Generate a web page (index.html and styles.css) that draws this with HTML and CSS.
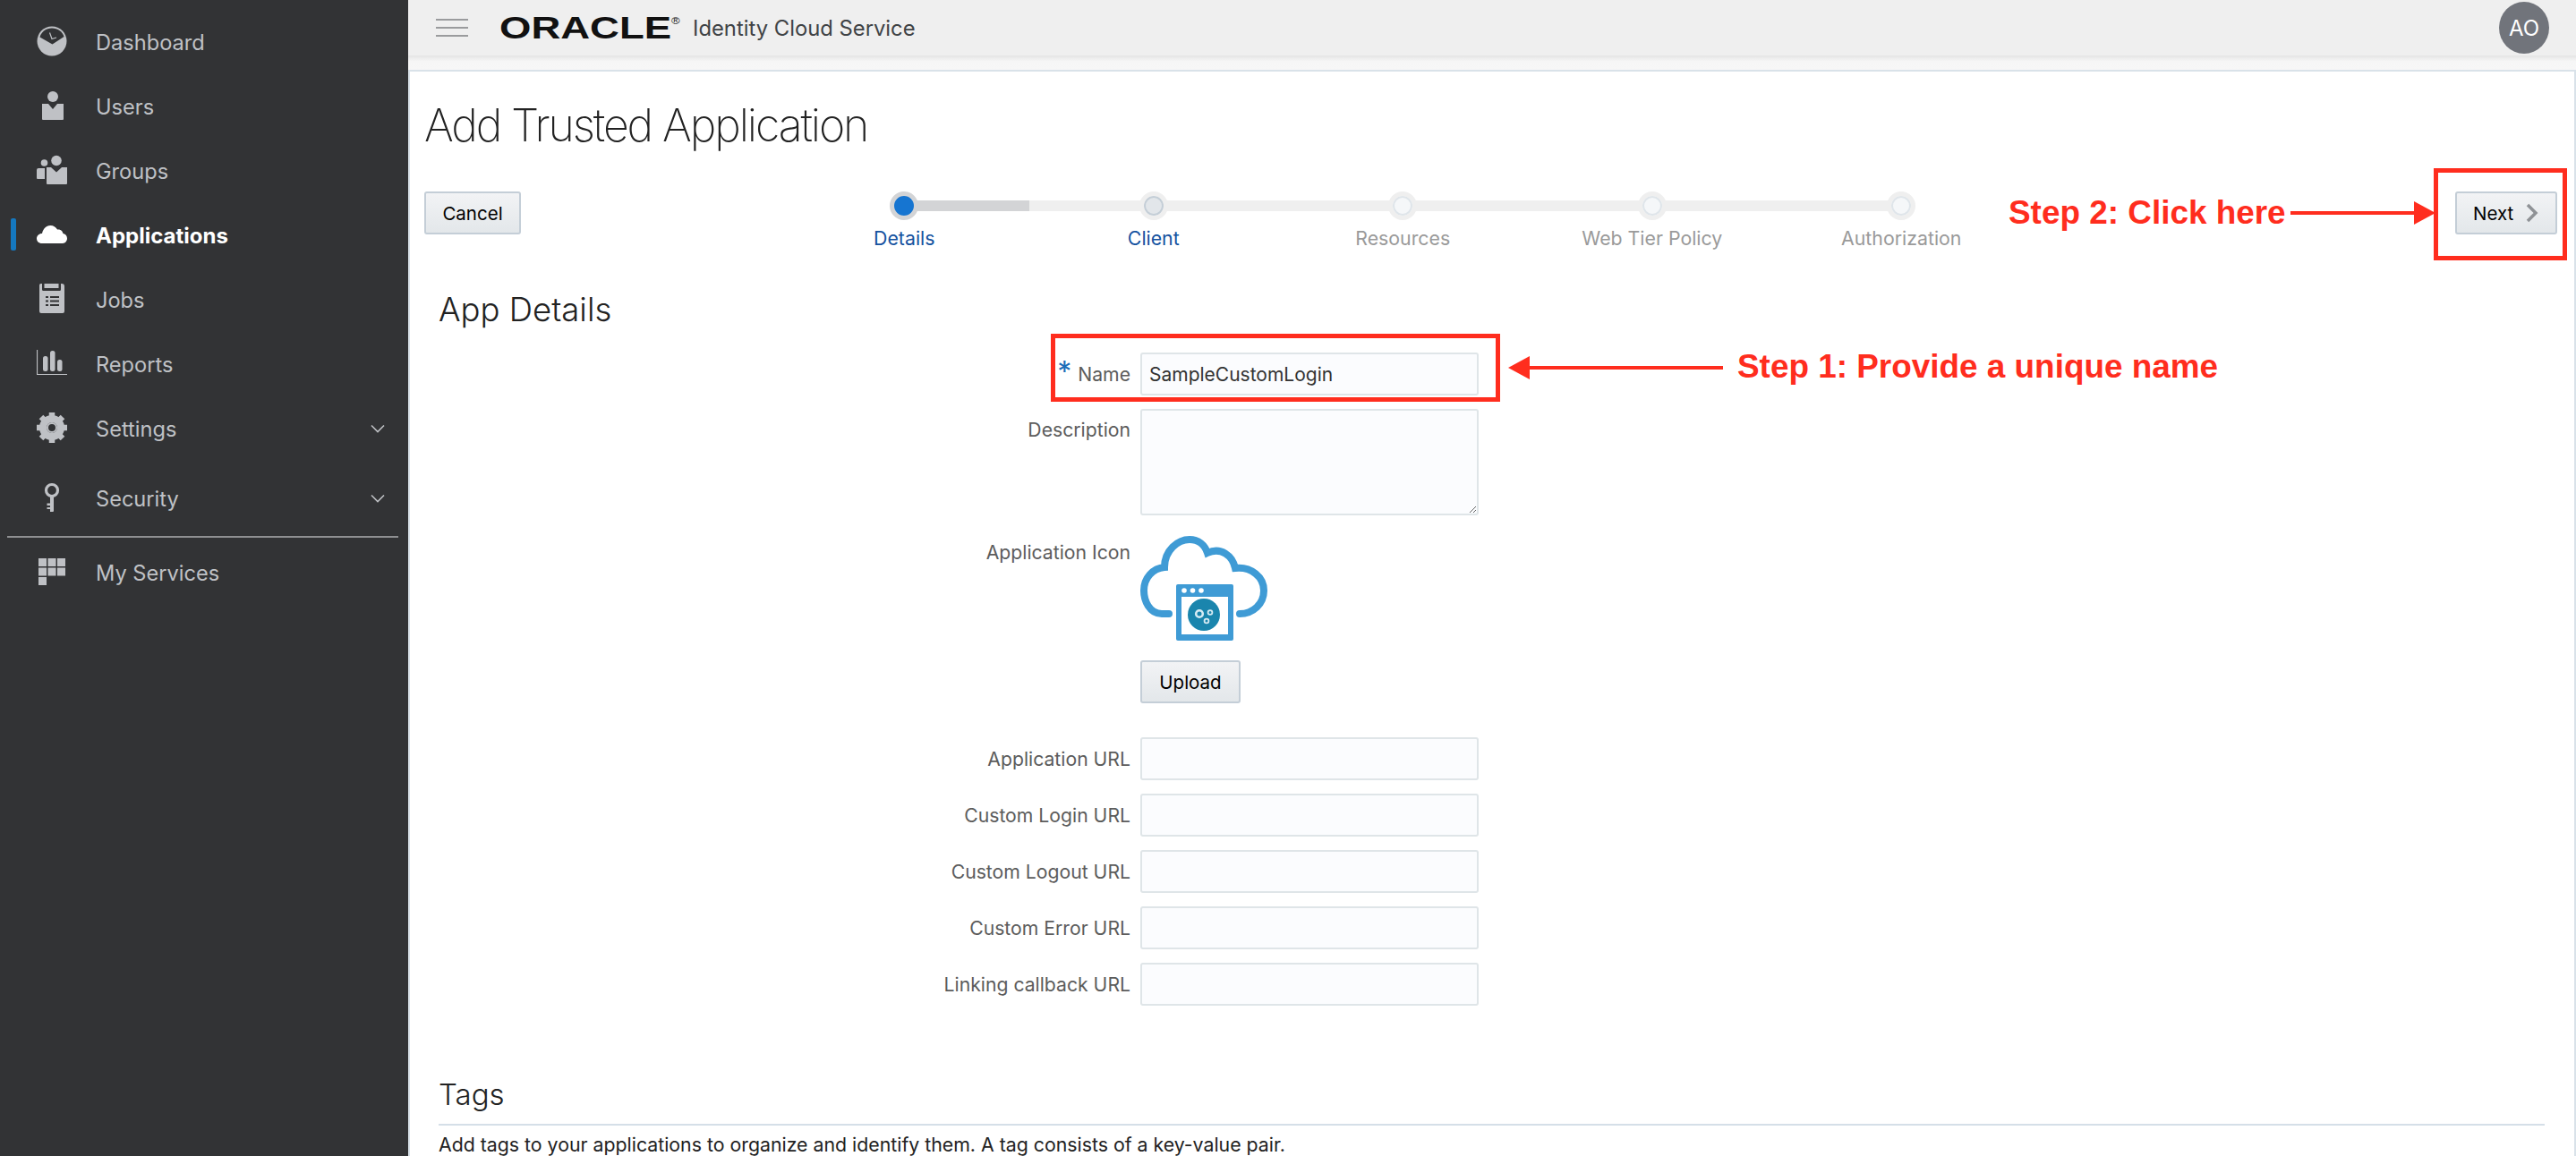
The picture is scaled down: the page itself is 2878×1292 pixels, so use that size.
FILE: index.html
```html
<!DOCTYPE html>
<html lang="en">
<head>
  <meta charset="UTF-8" />
  <title>Add Trusted Application</title>
  <link rel="stylesheet" href="styles.css">
</head>
<body>
  <aside class="sidebar">
    <nav class="nav">
      <a class="nav-item">
        <svg class="nav-icon" viewBox="0 0 34 34"><circle cx="17" cy="17" r="16.5" fill="currentColor"/><path d="M3.5 12.5C5 6.5 10.500 2.500 17 2.500s12 4 13.500 9.500L17.500 20.500Z" fill="#323335"/><path d="M14.500 7.500l2.500 7 5-1.500" fill="none" stroke="currentColor" stroke-width="1.200"/></svg>
        <span>Dashboard</span>
      </a>
      <a class="nav-item">
        <svg class="nav-icon" viewBox="0 0 34 34"><circle cx="18" cy="7" r="6" fill="currentColor"/><path d="M6 15h7l5 6 5-6h7v17a1 1 0 0 1-1 1H7a1 1 0 0 1-1-1Z" fill="currentColor"/></svg>
        <span>Users</span>
      </a>
      <a class="nav-item">
        <svg class="nav-icon" viewBox="0 0 34 34"><circle cx="22" cy="6.500" r="5.800" fill="currentColor"/><circle cx="8.500" cy="9" r="3.800" fill="currentColor"/><path d="M11 14h5l6 5.500 6-5.500h6v18a1 1 0 0 1-1 1H12a1 1 0 0 1-1-1Z" fill="currentColor"/><path d="M0 17a2 2 0 0 1 2-2h7v12H1a1 1 0 0 1-1-1Z" fill="currentColor"/></svg>
        <span>Groups</span>
      </a>
      <a class="nav-item nav-active">
        <svg class="nav-icon" viewBox="0 0 34 34"><path d="M6 27C2 27 0 24.500 0 21.500S2.500 16 6 16C7 10.500 11 7 15.500 7c3.500 0 6 2 7.500 4.500 4-.5 6 2 6.500 4.500 3 .5 4.500 3 4.500 5.500S32 27 29 27Z" fill="currentColor"/></svg>
        <span>Applications</span>
      </a>
      <a class="nav-item">
        <svg class="nav-icon" viewBox="0 0 34 34"><path d="M5.500 0H6v6.500a1.500 1.500 0 0 0 1.500 1.500h18A1.500 1.500 0 0 0 27 6.500V0h1a3 3 0 0 1 3 3v28a2 2 0 0 1-2 2H5a2 2 0 0 1-2-2V2a2 2 0 0 1 2.500-2ZM8.500 0h16v5h-16Z" fill="currentColor"/><path d="M10 15h3M15 15h10M10 19.500h3M15 19.500h10M10 24h3M15 24h10" stroke="#323335" stroke-width="2"/></svg>
        <span>Jobs</span>
      </a>
      <a class="nav-item">
        <svg class="nav-icon" viewBox="0 0 34 34"><path d="M.5 2v27.500H34" fill="none" stroke="currentColor" stroke-width="1.200"/><rect x="7" y="9" width="5.500" height="17" rx="2.500" fill="currentColor"/><rect x="15" y="3" width="5.500" height="23" rx="2.500" fill="currentColor"/><rect x="23" y="13" width="5.500" height="13" rx="2.500" fill="currentColor"/></svg>
        <span>Reports</span>
      </a>
      <a class="nav-item">
        <svg class="nav-icon" viewBox="0 0 34 34"><circle cx="17" cy="17" r="10" fill="none" stroke="currentColor" stroke-width="8"/><path d="M17 0v34M0 17h34M5 5l24 24M29 5L5 29" stroke="currentColor" stroke-width="6.500" stroke-dasharray="6 22"/><circle cx="17" cy="17" r="3.500" fill="#323335"/><circle cx="17" cy="17" r="5" fill="none" stroke="currentColor" stroke-width="2"/></svg>
        <span>Settings</span>
        <svg class="nav-chevron" viewBox="0 0 16 10"><path d="M1 1.500l7 7 7-7" fill="none" stroke="currentColor" stroke-width="1.600"/></svg>
      </a>
      <a class="nav-item nav-security">
        <svg class="nav-icon" viewBox="0 0 34 34"><circle cx="17" cy="9" r="6.500" fill="none" stroke="currentColor" stroke-width="3.200"/><path d="M15 15h4v17a1 1 0 0 1-1 1h-3v-3h-3.500v-2H15v-2h-3.500v-2.500H15Z" fill="currentColor"/></svg>
        <span>Security</span>
        <svg class="nav-chevron" viewBox="0 0 16 10"><path d="M1 1.500l7 7 7-7" fill="none" stroke="currentColor" stroke-width="1.600"/></svg>
      </a>
    </nav>
    <hr class="nav-divider">
    <a class="nav-item nav-services">
      <svg class="nav-icon" viewBox="0 0 34 34"><path d="M2 2h9v9H2ZM12.500 2h9v9h-9ZM23 2h9v9h-9ZM2 12.500h9v9H2ZM12.500 12.500h9v9h-9ZM23 12.500h9v9h-9ZM2 23h9v9H2Z" fill="currentColor"/></svg>
      <span>My Services</span>
    </a>
  </aside>

  <div class="main">
    <header class="topbar">
      <svg class="hamburger" viewBox="0 0 36 20"><path d="M0 1h36M0 10h36M0 19h36" stroke="#9a9b9d" stroke-width="2"/></svg>
      <span class="logo">ORACLE<sup>®</sup></span>
      <span class="product">Identity Cloud Service</span>
      <span class="avatar">AO</span>
    </header>
    <div class="topbar-shadow"></div>

    <section class="panel">
      <h1 class="title">Add Trusted Application</h1>

      <div class="actions">
        <button class="btn btn-cancel">Cancel</button>
        <ol class="stepper">
          <li class="track"><span class="track-done"></span></li>
          <li class="step step-current"><span class="dot"></span><span class="step-label">Details</span></li>
          <li class="step step-next"><span class="dot"></span><span class="step-label">Client</span></li>
          <li class="step"><span class="dot"></span><span class="step-label">Resources</span></li>
          <li class="step"><span class="dot"></span><span class="step-label">Web Tier Policy</span></li>
          <li class="step"><span class="dot"></span><span class="step-label">Authorization</span></li>
        </ol>
        <button class="btn btn-next">Next
          <svg class="next-icon" viewBox="0 0 14 22"><path d="M2 2l9 9-9 9" fill="none" stroke="#8f9296" stroke-width="3.500"/></svg>
        </button>
      </div>

      <h2 class="section-title">App Details</h2>

      <form class="form">
        <div class="row row-name">
          <label class="field-label"><span class="required">*</span>Name</label>
          <input class="field" type="text" value="SampleCustomLogin">
        </div>
        <div class="row row-desc">
          <label class="field-label">Description</label>
          <textarea class="field field-area"></textarea>
        </div>
        <div class="row row-icon">
          <label class="field-label">Application Icon</label>
          <div class="icon-col">
            <svg class="app-icon" viewBox="0 0 142 117">
              <path d="M32 87H24C10 87 4 72 4 61C4 47 14 36 27 35C27 16 42 4 55 4C65 4 72 10 75 19C90 12 103 22 106 36C124 34 138 46 138 61C138 76 126 87 111 87" fill="none" stroke="#3f9bd5" stroke-width="8" stroke-linecap="round"/>
              <rect x="40" y="54" width="64" height="63" rx="2" fill="#3f9bd5"/>
              <rect x="46" y="68" width="52" height="42" fill="#fff"/>
              <circle cx="49" cy="61" r="2.800" fill="#fff"/>
              <circle cx="58.500" cy="61" r="2.800" fill="#fff"/>
              <circle cx="68" cy="61" r="2.800" fill="#fff"/>
              <circle cx="71" cy="88" r="18" fill="#1a85ad"/>
              <circle cx="66" cy="87" r="3.800" fill="none" stroke="#d6ebf3" stroke-width="2.600"/>
              <circle cx="78" cy="85.500" r="2.400" fill="none" stroke="#d6ebf3" stroke-width="1.800"/>
              <circle cx="74" cy="95" r="2.400" fill="none" stroke="#d6ebf3" stroke-width="1.800"/>
            </svg>
            <button class="btn btn-upload" type="button">Upload</button>
          </div>
        </div>
        <div class="row row-url1">
          <label class="field-label">Application URL</label>
          <input class="field" type="text">
        </div>
        <div class="row row-url">
          <label class="field-label">Custom Login URL</label>
          <input class="field" type="text">
        </div>
        <div class="row row-url">
          <label class="field-label">Custom Logout URL</label>
          <input class="field" type="text">
        </div>
        <div class="row row-url">
          <label class="field-label">Custom Error URL</label>
          <input class="field" type="text">
        </div>
        <div class="row row-url">
          <label class="field-label">Linking callback URL</label>
          <input class="field" type="text">
        </div>
      </form>

      <h2 class="section-title tags-title">Tags</h2>
      <p class="tags-text">Add tags to your applications to organize and identify them. A tag consists of a key-value pair.</p>
    </section>
  </div>

  <div class="mark mark-name"></div>
  <div class="mark mark-next"></div>
  <svg class="arrow arrow-name" viewBox="0 0 240 26"><path d="M240 13H20" stroke="#ff2d1e" stroke-width="4"/><path d="M0 13L24 0V26Z" fill="#ff2d1e"/></svg>
  <svg class="arrow arrow-next" viewBox="0 0 162 26"><path d="M0 13H140" stroke="#ff2d1e" stroke-width="4"/><path d="M162 13L138 0V26Z" fill="#ff2d1e"/></svg>
  <div class="note note-name">Step 1: Provide a unique name</div>
  <div class="note note-next">Step 2: Click here</div>
</body>
</html>
```

FILE: styles.css
```css
* {
  box-sizing: border-box;
}
html, body {
  height: 100%;
  overflow: hidden;
}
body {
  margin: 0;
  display: flex;
  position: relative;
  background: #fff;
  font-family: Inter, "Liberation Sans", sans-serif;
  color: #333;
}

/* sidebar */
.sidebar {
  width: 456px;
  flex: none;
  background: #323335;
  padding-top: 10px;
  color: #bfc1c5;
}
.nav-item {
  height: 72px;
  display: flex;
  align-items: center;
  padding-left: 41px;
  position: relative;
  font-size: 23.6px;
}
.nav-item span {
  margin-top: 2px;
}
.nav-icon {
  width: 34px;
  height: 34px;
  flex: none;
  margin-right: 32px;
}
.nav-chevron {
  width: 16px;
  height: 10px;
  position: absolute;
  right: 26px;
  top: 32px;
}
.nav-active {
  color: #fff;
  font-weight: 700;
  font-size: 24px;
}
.nav-active::before {
  content: "";
  position: absolute;
  left: 12px;
  top: 18px;
  width: 6px;
  height: 36px;
  border-radius: 2px;
  background: #1578bf;
}
.nav-security {
  margin-top: 6px;
}
.nav-divider {
  margin: 7px 11px 0 8px;
  border: 0;
  height: 2px;
  background: #8f9092;
}
.nav-services {
  margin-top: 2px;
}

/* top bar */
.main {
  flex: 1;
  min-width: 0;
  display: flex;
  flex-direction: column;
}
.topbar {
  height: 62px;
  flex: none;
  background: #efefef;
  display: flex;
  align-items: center;
  padding-left: 31px;
}
.hamburger {
  width: 36px;
  height: 20px;
  margin-right: 35px;
}
.logo {
  width: 198px;
  font-family: "Liberation Sans", sans-serif;
  font-weight: 700;
  font-size: 35px;
  color: #111;
  display: inline-block;
  transform: scaleX(1.3);
  transform-origin: left center;
  white-space: nowrap;
}
.logo sup {
  font-size: 10px;
  font-weight: 400;
  vertical-align: 16px;
  line-height: 0;
}
.product {
  margin-left: 18px;
  font-size: 23.8px;
  color: #3f4346;
}
.avatar {
  margin-left: auto;
  margin-right: 30px;
  width: 56px;
  height: 58px;
  border-radius: 50%;
  background: #71747b;
  color: #fff;
  font-size: 24px;
  display: flex;
  align-items: center;
  justify-content: center;
}
.topbar-shadow {
  height: 16px;
  flex: none;
  background: linear-gradient(#e4e4e4, #f6f6f6 40%, #f7f7f7);
}

/* panel */
.panel {
  flex: 1;
  min-height: 0;
  border-top: 2px solid #d9e2e9;
  border-left: 2px solid #d9e2e9;
  border-right: 2px solid #d9e2e9;
}
.title {
  margin: 25px 0 0 16px;
  font-size: 50px;
  line-height: 70px;
  font-weight: 200;
  letter-spacing: -2.1px;
  color: #222;
}
.actions {
  display: flex;
  margin: 39px 19px 0 16px;
  align-items: flex-start;
}
.btn {
  height: 48px;
  padding: 0;
  border: 2px solid #c4ced7;
  border-radius: 3px;
  background: linear-gradient(#f2f3f5, #e3e7ea);
  color: #000;
  font-family: inherit;
  font-size: 20.5px;
}
.btn-cancel {
  width: 108px;
}
.btn-next {
  width: 114px;
  margin-left: auto;
  padding-left: 18px;
  display: flex;
  align-items: center;
}
.next-icon {
  width: 14px;
  height: 22px;
  margin-left: 14px;
}

/* stepper */
.stepper {
  margin: 0 0 0 289px;
  padding: 0;
  list-style: none;
  display: flex;
  position: relative;
}
.track {
  position: absolute;
  left: 139px;
  right: 139px;
  top: 10px;
  height: 12px;
  background: #efefef;
}
.track-done {
  display: block;
  width: 140px;
  height: 12px;
  background: #d3d4d6;
}
.step {
  width: 278.5px;
  display: flex;
  flex-direction: column;
  align-items: center;
  position: relative;
  font-size: 21.3px;
  color: #9a9a9a;
}
.dot {
  width: 32px;
  height: 32px;
  border-radius: 50%;
  background: #fff;
  border: 5px solid #efefef;
  box-shadow: inset 0 0 0 2px #dfe5ea;
  background-color: #f5f7f9;
}
.step-label {
  margin-top: 5px;
  line-height: 30px;
}
.step-current, .step-next {
  color: #14529f;
}
.step-current .dot {
  background: #1675d1;
  border-color: #d3d4d6;
  box-shadow: none;
}
.step-next .dot {
  background: #e2e6ea;
  box-shadow: inset 0 0 0 2px #c4ced7;
}

/* form */
.section-title {
  margin: 41px 0 0 32px;
  font-size: 36.500px;
  line-height: 48px;
  font-weight: 300;
  color: #222;
}
.row {
  display: grid;
  grid-template-columns: 805px 378px;
  column-gap: 11px;
  align-items: center;
}
.row-name {
  margin-top: 24px;
}
.row-desc {
  margin-top: 15px;
  align-items: start;
}
.row-desc .field-label {
  padding-top: 8px;
}
.row-icon {
  margin-top: 23px;
  align-items: start;
}
.row-icon .field-label {
  padding-top: 3px;
}
.row-url1 {
  margin-top: 38px;
}
.row-url {
  margin-top: 15px;
}
.field-label {
  text-align: right;
  font-size: 21.2px;
  line-height: 30px;
  color: #5c5c5c;
}
.required {
  color: #1b6db8;
  font-size: 32px;
  margin-right: 7px;
  line-height: 20px;
  vertical-align: -1px;
}
.field {
  display: block;
  width: 378px;
  height: 48px;
  padding: 0 8px;
  border: 2px solid #dfe5e8;
  border-radius: 3px;
  background: #fbfcfe;
  font-family: inherit;
  font-size: 21px;
  color: #333;
}
.field-area {
  height: 119px;
}
.icon-col {
  display: flex;
  flex-direction: column;
  align-items: flex-start;
}
.app-icon {
  width: 142px;
  height: 117px;
}
.btn-upload {
  margin-top: 22px;
  width: 112px;
}
.tags-title {
  margin-top: 75px;
  padding-bottom: 9px;
  margin-right: 33px;
  font-size: 33px;
  border-bottom: 2px solid #d5dfe8;
}
.tags-text {
  margin: 13px 0 0 32px;
  font-size: 21.3px;
  line-height: 17px;
  color: #222;
}

/* red annotations on top of the screenshot */
.mark {
  position: absolute;
  border: 5px solid #ff2d1e;
}
.mark-name {
  left: 1174px;
  top: 373px;
  width: 502px;
  height: 76px;
}
.mark-next {
  left: 2719px;
  top: 188px;
  width: 149px;
  height: 103px;
}
.arrow {
  position: absolute;
  height: 26px;
}
.arrow-name {
  left: 1685px;
  top: 398px;
  width: 240px;
}
.arrow-next {
  left: 2559px;
  top: 225px;
  width: 162px;
}
.note {
  position: absolute;
  font-family: "Liberation Sans", sans-serif;
  font-weight: 700;
  font-size: 36.900px;
  line-height: 40px;
  color: #ff2d1e;
  white-space: nowrap;
}
.note-name {
  left: 1941px;
  top: 390px;
}
.note-next {
  left: 2244px;
  top: 218px;
}
```
